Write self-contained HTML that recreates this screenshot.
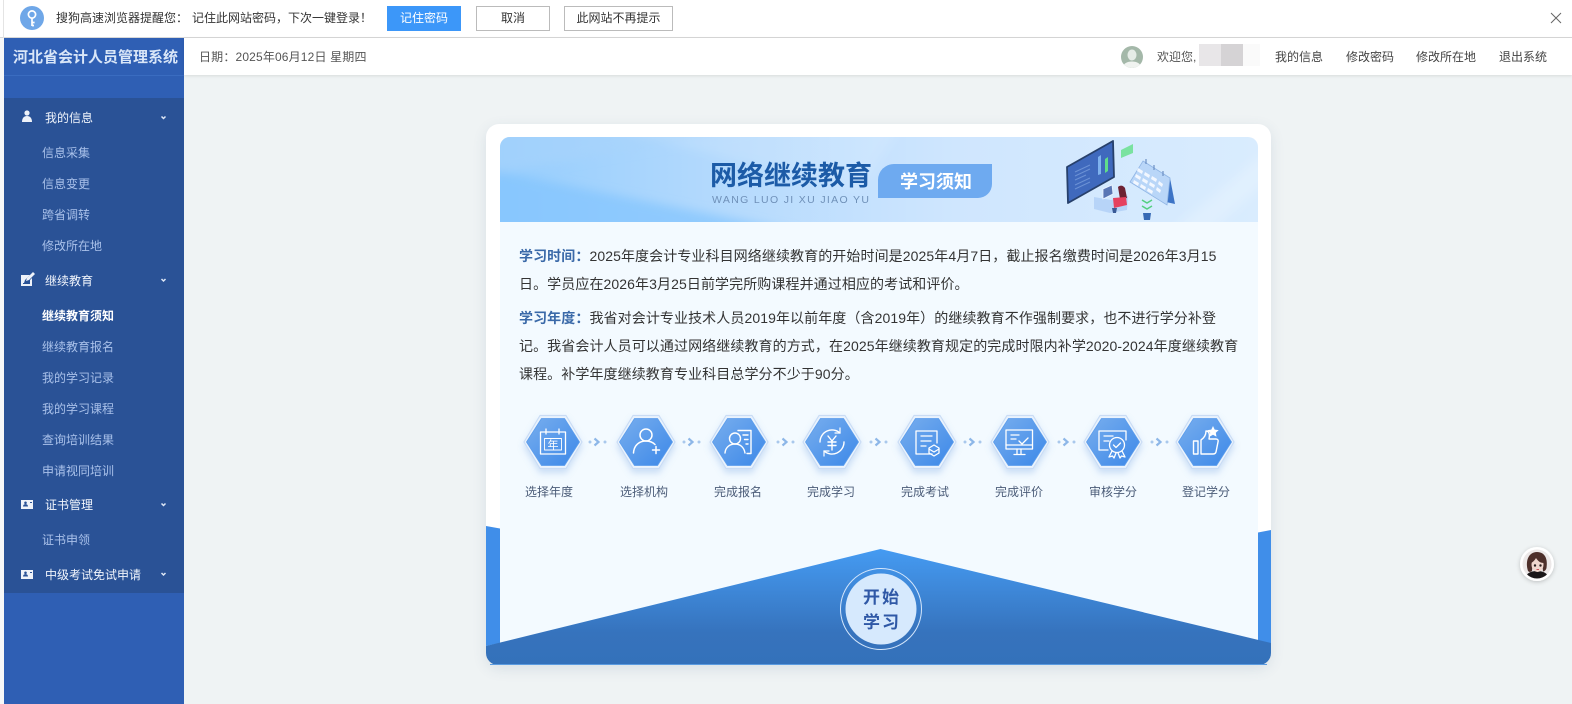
<!DOCTYPE html>
<html lang="zh-CN">
<head>
<meta charset="utf-8">
<title>河北省会计人员管理系统</title>
<style>
html,body{margin:0;padding:0;width:1572px;height:704px;overflow:hidden;background:#eff3f4;font-family:"Liberation Sans","Noto Sans CJK SC",sans-serif;font-size:12px;color:#333}
.a{position:absolute}
.t{position:absolute;white-space:nowrap;line-height:20px}
.btn{position:absolute;top:6px;height:23px;line-height:23px;text-align:center;border:1px solid #bbb;background:#fff;color:#333;font-size:12px}
.g{color:#f1f5fc;font-size:12px;left:45px}
.s{color:#a9c1ea;font-size:12px;left:42px}
.l{color:#4b5c78;font-size:12px}
.p{position:absolute;left:519px;white-space:nowrap;font-size:14px;line-height:28px;color:#333;letter-spacing:.09px}
.p b{color:#3a69a8;font-weight:bold}
</style>
</head>
<body>
<!-- top notification bar -->
<div class="a" style="left:0;top:0;width:1572px;height:37px;background:#fff;border-bottom:1px solid #d8d8d8"></div>
<div class="a" style="left:3px;top:0;width:1px;height:38px;background:#e4e4e4"></div>
<svg class="a" style="left:20px;top:6px" width="24" height="24" viewBox="0 0 24 24"><circle cx="12" cy="12" r="12" fill="#6fa7e8"/><circle cx="12" cy="8.500" r="3.600" fill="none" stroke="#fff" stroke-width="1.700"/><path d="M12 12v8M12 16.500h2.600M12 19.500h2" stroke="#fff" stroke-width="1.700" fill="none"/></svg>
<div class="t" style="left:56px;top:8px;color:#333">搜狗高速浏览器提醒您：</div>
<div class="t" style="left:192px;top:8px;color:#333">记住此网站密码，下次一键登录！</div>
<div class="btn" style="left:387px;width:74px;height:25px;line-height:25px;border:0;background:#3c97f9;color:#fff">记住密码</div>
<div class="btn" style="left:476px;width:72px">取消</div>
<div class="btn" style="left:564px;width:107px">此网站不再提示</div>
<svg class="a" style="left:1550px;top:12px" width="12" height="12" viewBox="0 0 12 12"><path d="M1 1l10 10M11 1L1 11" stroke="#666" stroke-width="1" fill="none"/></svg>

<!-- sidebar -->
<div class="a" style="left:0;top:38px;width:4px;height:666px;background:#f7f8f8"></div>
<div class="a" style="left:4px;top:38px;width:180px;height:666px;background:#2f5fb4"></div>
<div class="a" style="left:4px;top:75px;width:180px;height:1px;background:#3a6cc0"></div>
<div class="a" style="left:4px;top:98px;width:180px;height:495px;background:#2a5296"></div>
<div class="t" style="left:13px;top:48px;font-size:15px;font-weight:bold;color:#d9e6f8">河北省会计人员管理系统</div>

<div class="t g" style="top:108px">我的信息</div>
<div class="t s" style="top:143px">信息采集</div>
<div class="t s" style="top:174px">信息变更</div>
<div class="t s" style="top:205px">跨省调转</div>
<div class="t s" style="top:236px">修改所在地</div>
<div class="t g" style="top:271px">继续教育</div>
<div class="t s" style="top:306px;color:#fff;font-weight:bold">继续教育须知</div>
<div class="t s" style="top:337px">继续教育报名</div>
<div class="t s" style="top:368px">我的学习记录</div>
<div class="t s" style="top:399px">我的学习课程</div>
<div class="t s" style="top:430px">查询培训结果</div>
<div class="t s" style="top:461px">申请视同培训</div>
<div class="t g" style="top:495px">证书管理</div>
<div class="t s" style="top:530px">证书申领</div>
<div class="t g" style="top:565px">中级考试免试申请</div>

<svg class="a" style="left:0;top:0" width="184" height="600" viewBox="0 0 184 600">
  <g fill="#eef2f9">
    <circle cx="27" cy="113" r="2.600"/><path d="M22 122c0-4 2-6 5-6s5 2 5 6z"/>
    <path d="M21 275h9l-2 2h-5v7h7v-4l2-2v8H21z" /><path d="M26 281l1-3 6-6 2 2-6 6z"/><path d="M23 277h5l-3 3-1 3h-1z"/>
    <path fill-rule="evenodd" d="M21 500h12v9H21zM23 506.500c0-1.500 1-2.400 2.500-2.400s2.500 .9 2.500 2.400zM30 502h2v1h-2z"/>
    <path fill-rule="evenodd" d="M21 570h12v9H21zM23 576.500c0-1.500 1-2.400 2.500-2.400s2.500 .9 2.500 2.400zM30 572h2v1h-2z"/>
  </g>
  <g fill="#d6e2f5">
    <circle cx="25.500" cy="502.800" r="1.300" fill="#2a5296"/><circle cx="25.500" cy="572.800" r="1.300" fill="#2a5296"/>
  </g>
  <g fill="none" stroke="#dfe8f6" stroke-width="1.500">
    <path d="M161.500 116.500l2 2 2-2M161.500 279l2 2 2-2M161.500 503.500l2 2 2-2M161.500 573l2 2 2-2"/>
  </g>
</svg>

<!-- header -->
<div class="a" style="left:184px;top:38px;width:1388px;height:37px;background:#fff;box-shadow:0 1px 3px rgba(0,0,0,.1)"></div>
<div class="t" style="left:199px;top:47px;color:#555;letter-spacing:.16px">日期：2025年06月12日 星期四</div>
<svg class="a" style="left:1121px;top:46px" width="22" height="22" viewBox="0 0 22 22"><defs><clipPath id="av"><circle cx="11" cy="11" r="11"/></clipPath></defs><g clip-path="url(#av)"><rect width="22" height="22" fill="#a4b8a9"/><ellipse cx="11" cy="9" rx="4.500" ry="5.500" fill="#e6ece7"/><ellipse cx="11" cy="21" rx="9" ry="5.500" fill="#f0f3f0"/></g></svg>
<div class="t" style="left:1157px;top:47px;color:#555">欢迎您,</div>
<div class="a" style="left:1199px;top:44px;width:22px;height:22px;background:#e8e6e8"></div>
<div class="a" style="left:1221px;top:44px;width:22px;height:22px;background:#d5d3d5"></div>
<div class="a" style="left:1243px;top:44px;width:17px;height:22px;background:#fafafa"></div>
<div class="t" style="left:1275px;top:47px;color:#444">我的信息</div>
<div class="t" style="left:1346px;top:47px;color:#444">修改密码</div>
<div class="t" style="left:1416px;top:47px;color:#444">修改所在地</div>
<div class="t" style="left:1499px;top:47px;color:#444">退出系统</div>

<!-- card -->
<div class="a" style="left:486px;top:124px;width:785px;height:541px;background:#fff;border-radius:13px;box-shadow:0 4px 14px rgba(60,90,130,.12)"></div>
<svg class="a" style="left:486px;top:124px" width="785" height="541" viewBox="486 124 785 541">
  <defs>
    <linearGradient id="bn" x1="0" y1="0" x2="1" y2="0"><stop offset="0" stop-color="#95cdfd"/><stop offset=".3" stop-color="#b5dafd"/><stop offset=".6" stop-color="#cfe6fe"/><stop offset="1" stop-color="#d9ecfe"/></linearGradient>
    <linearGradient id="tri" x1="0" y1="0" x2="0" y2="1"><stop offset="0" stop-color="#459bf2"/><stop offset=".72" stop-color="#3673bd"/><stop offset="1" stop-color="#3471ba"/></linearGradient>
    <linearGradient id="hx" x1="0" y1="0" x2="1" y2="1"><stop offset="0" stop-color="#78aeee"/><stop offset="1" stop-color="#3c88e8"/></linearGradient>
    <filter id="sh" x="-30%" y="-30%" width="160%" height="170%"><feDropShadow dx="0" dy="4" stdDeviation="3.500" flood-color="#5b93dd" flood-opacity=".28"/></filter>
    <filter id="bl" x="-10%" y="-30%" width="120%" height="160%"><feGaussianBlur stdDeviation="5"/></filter>
    <clipPath id="bc"><path d="M500 222V147a10 10 0 0 1 10-10H1248a10 10 0 0 1 10 10V222z"/></clipPath>
    <g id="hex">
      <path d="M-13-26.500H13L29 0 13 26.500H-13L-29 0z" fill="#eaf3fd" stroke="#c9dcf5" stroke-width="1.200" stroke-linejoin="round" filter="url(#sh)"/>
      <path d="M-11.500-23.500H11.500L26.500 0 11.500 23.500H-11.500L-26.500 0z" fill="url(#hx)" stroke="#5c9dec" stroke-width=".8" stroke-linejoin="round"/>
    </g>
    <g id="arr"><circle cx="-8" cy="0" r="1.500" fill="#a9c8ec"/><path d="M-3.500-3.500 .5 0-3.500 3.500" fill="none" stroke="#8db7e8" stroke-width="2.200"/><circle cx="7" cy="0" r="1.500" fill="#a9c8ec"/></g>
  </defs>

  <!-- body bg -->
  <rect x="500" y="222" width="758" height="430" fill="#f3faff"/>

  <!-- banner -->
  <g clip-path="url(#bc)">
    <rect x="500" y="137" width="758" height="85" fill="url(#bn)"/>
    <g filter="url(#bl)">
      <path d="M490 175L760 127H490z" fill="#a8d4fb" opacity=".6"/>
      <path d="M490 170L800 232H490z" fill="#82c4fd" opacity=".7"/>
      <path d="M600 127L860 190 900 127z" fill="#fff" opacity=".12"/>
      <path d="M1170 232L1268 150V180L1210 232z" fill="#fff" opacity=".2"/>
    </g>
  </g>
  <text x="710" y="185" font-family="'Liberation Sans','Noto Sans CJK SC',sans-serif" font-size="27" font-weight="bold" fill="#1c5ba7" textLength="162">网络继续教育</text>
  <text x="712" y="203" font-family="'Liberation Sans','Noto Sans CJK SC',sans-serif" font-size="10.500" fill="#6f90b8" textLength="157">WANG LUO JI XU JIAO YU</text>
  <path d="M878 180a16 16 0 0 1 16-16H992V184a14 14 0 0 1-14 14H878z" fill="#6eaaf0"/>
  <text x="900" y="188" font-family="'Liberation Sans','Noto Sans CJK SC',sans-serif" font-size="18" font-weight="bold" fill="#fff">学习须知</text>

  <!-- illustration -->
  <path d="M1067 167L1113 141 1114 177 1068 203z" fill="#3f69bd" stroke="#27406b" stroke-width="1.800" stroke-linejoin="round"/>
  <path d="M1098 157l3-2v19l-3 1z" fill="#7fb2ee"/><path d="M1105 159l3-2v14l-3 2z" fill="#5fdc8a"/>
  <path d="M1075 172l15-7M1075 176l15-7M1075 180l11-5M1075 185l15-7M1075 189l15-7" stroke="#7ea3e0" stroke-width="1" opacity=".7"/>
  <path d="M1121 150l12-6v9l-12 5z" fill="#7ae2a0"/>
  <path d="M1170 178l5 26-9-2z" fill="#3d74c6"/>
  <path d="M1143 161l27 17-3 27-37-23z" fill="#b9d6f8" stroke="#8fb4e4" stroke-width=".8"/>
  <path d="M1146 159v5M1154 165v5M1163 171v5" stroke="#6c8fc4" stroke-width="1.200"/>
  <g fill="#f4f9ff" opacity=".95"><path d="M1138 168l5 3-1 3-5-3zM1145 172l5 3-1 3-5-3zM1152 176l5 3-1 3-5-3zM1159 181l4 3-1 3-4-3zM1136 174l5 3-1 3-5-3zM1143 178l5 3-1 3-5-3zM1150 182l5 3-1 3-5-3zM1157 187l4 3-1 3-4-3zM1134 180l5 3-1 3-5-3zM1141 184l5 3-1 3-5-3zM1148 188l5 3-1 3-5-3z"/></g>
  <path d="M1094 197l17 3 17-4-1 14-17 3-16-4z" fill="#b7d4f8"/>
  <path d="M1103 189l9-4 1 9-10 5z" fill="#5a76b4" stroke="#eef4ff" stroke-width=".8"/>
  <path d="M1118 187c2-2 5-2 7 1l2 10-7 1z" fill="#6d2233"/>
  <path d="M1113 198l13-1 1 8-13 3z" fill="#e5415f"/>
  <path d="M1112 208h5l-1 5h-3z" fill="#3a5a96"/>
  <path d="M1142 200l5 3 5-3M1142 206l5 3 5-3" stroke="#54cf80" stroke-width="1.500" fill="none"/>
  <path d="M1143 213h8l-1 7h-6z" fill="#3669b4"/>

  <!-- steps -->
  <use href="#hex" x="553" y="442"/><use href="#hex" x="646" y="442"/><use href="#hex" x="739" y="442"/><use href="#hex" x="832" y="442"/>
  <use href="#hex" x="927" y="442"/><use href="#hex" x="1020" y="442"/><use href="#hex" x="1113" y="442"/><use href="#hex" x="1205" y="442"/>
  <use href="#arr" x="598" y="442"/><use href="#arr" x="692" y="442"/><use href="#arr" x="786" y="442"/><use href="#arr" x="879" y="442"/>
  <use href="#arr" x="973" y="442"/><use href="#arr" x="1067" y="442"/><use href="#arr" x="1160" y="442"/>

  <g fill="none" stroke="#fff" stroke-width="1.300" stroke-linecap="round" stroke-linejoin="round">
    <g transform="translate(553 442)">
      <rect x="-12.500" y="-10" width="25" height="22"/><path d="M-7-13v5M6-13v5"/><rect x="-8.500" y="-3.500" width="17" height="11.500" stroke-width=".9"/>
      <text x="0" y="6.500" text-anchor="middle" font-size="11" fill="#fff" stroke="none" font-family="'Liberation Sans','Noto Sans CJK SC',sans-serif">年</text>
    </g>
    <g transform="translate(646 442)" stroke-width="1.500">
      <circle cx="0" cy="-7" r="6"/><path d="M-12.500 11C-12 2.500-6-1 0-1 3.500-1 6.500 0 9 2.500"/><path d="M10 4.500v7M6.500 8h7"/>
    </g>
    <g transform="translate(739 442)" stroke-width="1.400">
      <circle cx="-4" cy="-3.500" r="5.500"/><path d="M-14 11c.5-6 5-9 10-9s9 3 10 9"/><path d="M-1-11.500H12V11.500H8"/><path d="M4-7h5M5.500-2.500H9M7 2H9"/>
    </g>
    <g transform="translate(832 442)" stroke-width="1.400">
      <path d="M-12 0a12 12 0 0 1 20-9M12 0a12 12 0 0 1-20 9"/><path d="M8-14v5h-5M-8 14V9h5" stroke-width="1.200"/>
      <path d="M-4-6 0-1 4-6M-4 0H4M-4 3.500H4M0-1V8"/>
    </g>
    <g transform="translate(927 442)">
      <path d="M5 12H-11V-11H10V1"/><path d="M-6-6H5M-6-1H4M-6 4H-1"/><path d="M7 3l5 3v5l-5 3-5-3V6z"/><path d="M2 7l5 3 5-3"/>
    </g>
    <g transform="translate(1020 442)">
      <rect x="-14" y="-12" width="26.500" height="19"/><path d="M-14 3H12.500M-3 7v5M1 7v5M-6 12.500H5"/><path d="M-9-7H-1M-9-3H-4M-1-1 2 2 8-4"/>
    </g>
    <g transform="translate(1113 442)">
      <path d="M-5 8H-14V-11H13V-2"/><path d="M-9-6H0M-9-1H-4"/><circle cx="4" cy="3" r="7.500"/><path d="M.5 3 3 5.500 7.500 1"/><path d="M-1 9-4 15-.5 14 1 16 3 11M9 9 12 15 8.500 14 7 16 5 11"/>
    </g>
    <g transform="translate(1205 442)" stroke-width="1.400">
      <path d="M-11.500-1H-7V12H-11.500zM-4-2c3-2 5-5 5-9 3 0 4 3 3 8H11c2 0 2.500 1.500 2 3L11 10c-.5 1.500-1.500 2-3 2H-4z"/>
      <path d="M8-16l1.700 3.600 4 .5-2.900 2.700.7 3.900-3.500-1.900-3.500 1.900.7-3.900-2.900-2.700 4-.5z" fill="#fff" stroke="none"/>
    </g>
  </g>

  <!-- bottom blue -->
  <path d="M486 526L500 528.500V643L486 646z" fill="#408ee9"/>
  <path d="M1258 532.500L1271 530V646L1258 642z" fill="#408ee9"/>
  <path d="M486 646L880.500 549 1271 643V653a12 12 0 0 1-12 12H498a12 12 0 0 1-12-12z" fill="url(#tri)"/>
  <path d="M490 664.500H1267" stroke="#5b9be0" stroke-width="1"/>
  <circle cx="881" cy="609" r="40.500" fill="none" stroke="#d4e6fb" stroke-width="1"/>
  <circle cx="881" cy="609" r="35.500" fill="#d6e9fd"/>
  <text x="863" y="603" font-family="'Liberation Sans','Noto Sans CJK SC',sans-serif" font-size="17" font-weight="bold" fill="#2f58a6" textLength="36">开始</text>
  <text x="863" y="628" font-family="'Liberation Sans','Noto Sans CJK SC',sans-serif" font-size="17" font-weight="bold" fill="#2f58a6" textLength="36">学习</text>
</svg>

<div class="p" style="top:242px"><b>学习时间：</b>2025年度会计专业科目网络继续教育的开始时间是2025年4月7日，截止报名缴费时间是2026年3月15</div>
<div class="p" style="top:270px">日。学员应在2026年3月25日前学完所购课程并通过相应的考试和评价。</div>
<div class="p" style="top:304px"><b>学习年度：</b>我省对会计专业技术人员2019年以前年度（含2019年）的继续教育不作强制要求，也不进行学分补登</div>
<div class="p" style="top:332px">记。我省会计人员可以通过网络继续教育的方式，在2025年继续教育规定的完成时限内补学2020-2024年度继续教育</div>
<div class="p" style="top:360px">课程。补学年度继续教育专业科目总学分不少于90分。</div>

<div class="t l" style="left:525px;top:482px">选择年度</div>
<div class="t l" style="left:620px;top:482px">选择机构</div>
<div class="t l" style="left:714px;top:482px">完成报名</div>
<div class="t l" style="left:807px;top:482px">完成学习</div>
<div class="t l" style="left:901px;top:482px">完成考试</div>
<div class="t l" style="left:995px;top:482px">完成评价</div>
<div class="t l" style="left:1089px;top:482px">审核学分</div>
<div class="t l" style="left:1182px;top:482px">登记学分</div>

<!-- floating avatar -->
<svg class="a" style="left:1515px;top:542px" width="44" height="44" viewBox="0 0 44 44">
  <defs><filter id="fs" x="-30%" y="-30%" width="160%" height="160%"><feDropShadow dx="0" dy="1" stdDeviation="2" flood-color="#000" flood-opacity=".22"/></filter><clipPath id="fc"><circle cx="22" cy="22" r="14.500"/></clipPath></defs>
  <circle cx="22" cy="22" r="17" fill="#fff" filter="url(#fs)"/>
  <circle cx="22" cy="22" r="14.500" fill="#ece8e8"/>
  <g clip-path="url(#fc)">
    <path d="M10 37c1-6 6-8 12-8s11 2 12 8z" fill="#1a1719"/>
    <path d="M13 29c-3-9 0-19 9-19 8 0 11 7 9.500 16-.5 2-2 3.500-3.500 3.500L27 18l-9-1-1 12c-2 1.500-3 1-4 0z" fill="#4d2f2a"/>
    <ellipse cx="22.500" cy="22.500" rx="6" ry="7.500" fill="#f0d6cd"/>
    <path d="M16 21c1-6 5-8 9-7 2 1 4 3 4 7-4 0-6-2-8-5-1 2-3 4-5 5z" fill="#4d2f2a"/>
    <circle cx="20" cy="23.500" r="1.200" fill="#2a1f1f"/><circle cx="25.500" cy="23.500" r="1.200" fill="#2a1f1f"/>
    <path d="M21.500 27.500h2.500" stroke="#c9545c" stroke-width="1"/>
  </g>
</svg>
</body>
</html>
